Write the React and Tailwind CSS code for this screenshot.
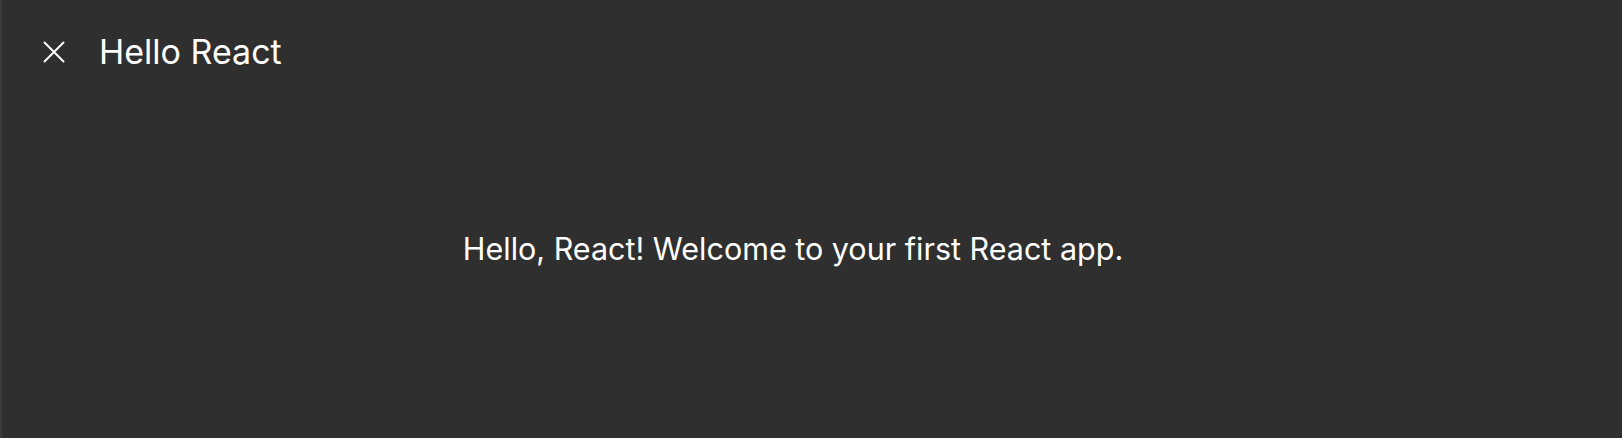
import React from "react";

function CloseIcon() {
  return (
    <svg width="22" height="22" viewBox="0 0 22 22" fill="none" stroke="currentColor" strokeWidth="1.9" strokeLinecap="round">
      <path d="M1.5 1.5 L20.5 20.5 M20.5 1.5 L1.5 20.5" />
    </svg>
  );
}

export default function App() {
  return (
    <div className="h-[438px] w-full bg-[#2f2f2f] border-l-2 border-[#3b3b3b] text-white flex flex-col font-['Inter',sans-serif]">
      <header className="h-[104px] flex items-center pl-[41px]">
        <button className="text-white flex items-center">
          <CloseIcon />
        </button>
        <h1 className="ml-[34px] text-[34px] leading-none">Hello React</h1>
      </header>
      <main className="flex-1 flex justify-center pt-[130px] pr-[38px]">
        <p className="text-[30.5px] leading-none">Hello, React! Welcome to your first React app.</p>
      </main>
    </div>
  );
}
